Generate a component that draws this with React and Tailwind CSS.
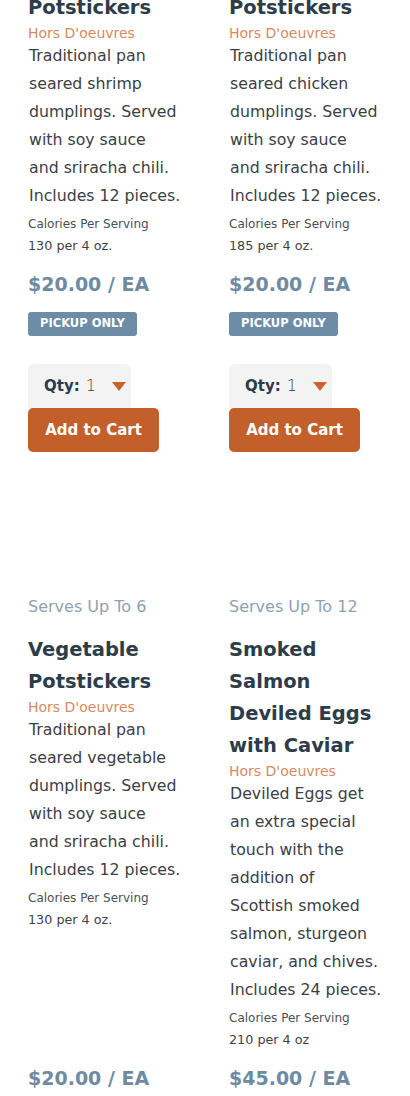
const products = [
  {
    serves: "Serves Up To 6",
    title: ["Shrimp", "Potstickers"],
    desc: ["Traditional pan", "seared shrimp", "dumplings. Served", "with soy sauce", "and sriracha chili.", "Includes 12 pieces."],
    calories: "130 per 4 oz.",
    price: "$20.00",
  },
  {
    serves: "Serves Up To 6",
    title: ["Chicken", "Potstickers"],
    desc: ["Traditional pan", "seared chicken", "dumplings. Served", "with soy sauce", "and sriracha chili.", "Includes 12 pieces."],
    calories: "185 per 4 oz.",
    price: "$20.00",
  },
  {
    serves: "Serves Up To 6",
    title: ["Vegetable", "Potstickers"],
    desc: ["Traditional pan", "seared vegetable", "dumplings. Served", "with soy sauce", "and sriracha chili.", "Includes 12 pieces."],
    calories: "130 per 4 oz.",
    price: "$20.00",
  },
  {
    serves: "Serves Up To 12",
    title: ["Smoked", "Salmon", "Deviled Eggs", "with Caviar"],
    desc: [
      "Deviled Eggs get",
      "an extra special",
      "touch with the",
      "addition of",
      "Scottish smoked",
      "salmon, sturgeon",
      "caviar, and chives.",
      "Includes 24 pieces.",
    ],
    calories: "210 per 4 oz",
    price: "$45.00",
  },
];

function ProductCard({ p }) {
  return (
    <div className="flex flex-col whitespace-nowrap">
      <p className="text-[16px] leading-[24px] text-[#8ea2b3] mb-[15px]">{p.serves}</p>
      <h3 className="text-[19.5px] leading-[32px] font-bold text-[#2c3d49]">
        {p.title.map((t, i) => (
          <span key={i} className="block">{t}</span>
        ))}
      </h3>
      <p className="text-[14px] leading-[18px] text-[#d58a62]">Hors D'oeuvres</p>
      <p className="text-[15.75px] leading-[28px] text-[#3a4046] pl-px">
        {p.desc.map((t, i) => (
          <span key={i} className="block">{t}</span>
        ))}
      </p>
      <p className="mt-[4px] text-[12px] leading-[20px] text-[#4a4f54]">Calories Per Serving</p>
      <p className="mt-[1px] text-[12.75px] leading-[22px] text-[#3e4348]">{p.calories}</p>
      <div className="mt-auto pt-[13px]">
        <p className="text-[19px] leading-[28px] font-bold text-[#6f8ba2]">{p.price} / EA</p>
        <div className="mt-[14px] inline-flex h-[24px] items-center rounded-[3px] bg-[#6d8ca5] px-[12px] text-[11.5px] font-bold text-white">
          PICKUP ONLY
        </div>
        <div className="mt-[28px] flex h-[44px] w-[103px] items-center rounded-t-[6px] bg-[#f3f3f3] pl-[16px]">
          <span className="text-[15px] font-bold text-[#2c3d49]">Qty:</span>
          <span className="ml-[6px] text-[16px] font-light text-[#3a4046]">1</span>
          <svg className="ml-[16px]" width="14" height="9" viewBox="0 0 14 9">
            <polygon points="0,0 14,0 7,9" fill="#c9622b" />
          </svg>
        </div>
        <button className="flex h-[44px] w-[131px] items-center justify-center rounded-[5px] bg-[#c25f2b] text-[15px] font-bold text-white">
          Add to Cart
        </button>
      </div>
    </div>
  );
}

export default function App() {
  return (
    <div
      className="min-h-screen bg-white overflow-hidden"
      style={{ fontFamily: '"DejaVu Sans", "Open Sans", sans-serif' }}
    >
      <div className="mt-[-79px] grid grid-cols-[155px_155px] gap-x-[46px] gap-y-[143px] px-[28px]">
        {products.map((p, i) => (
          <ProductCard key={i} p={p} />
        ))}
      </div>
    </div>
  );
}
